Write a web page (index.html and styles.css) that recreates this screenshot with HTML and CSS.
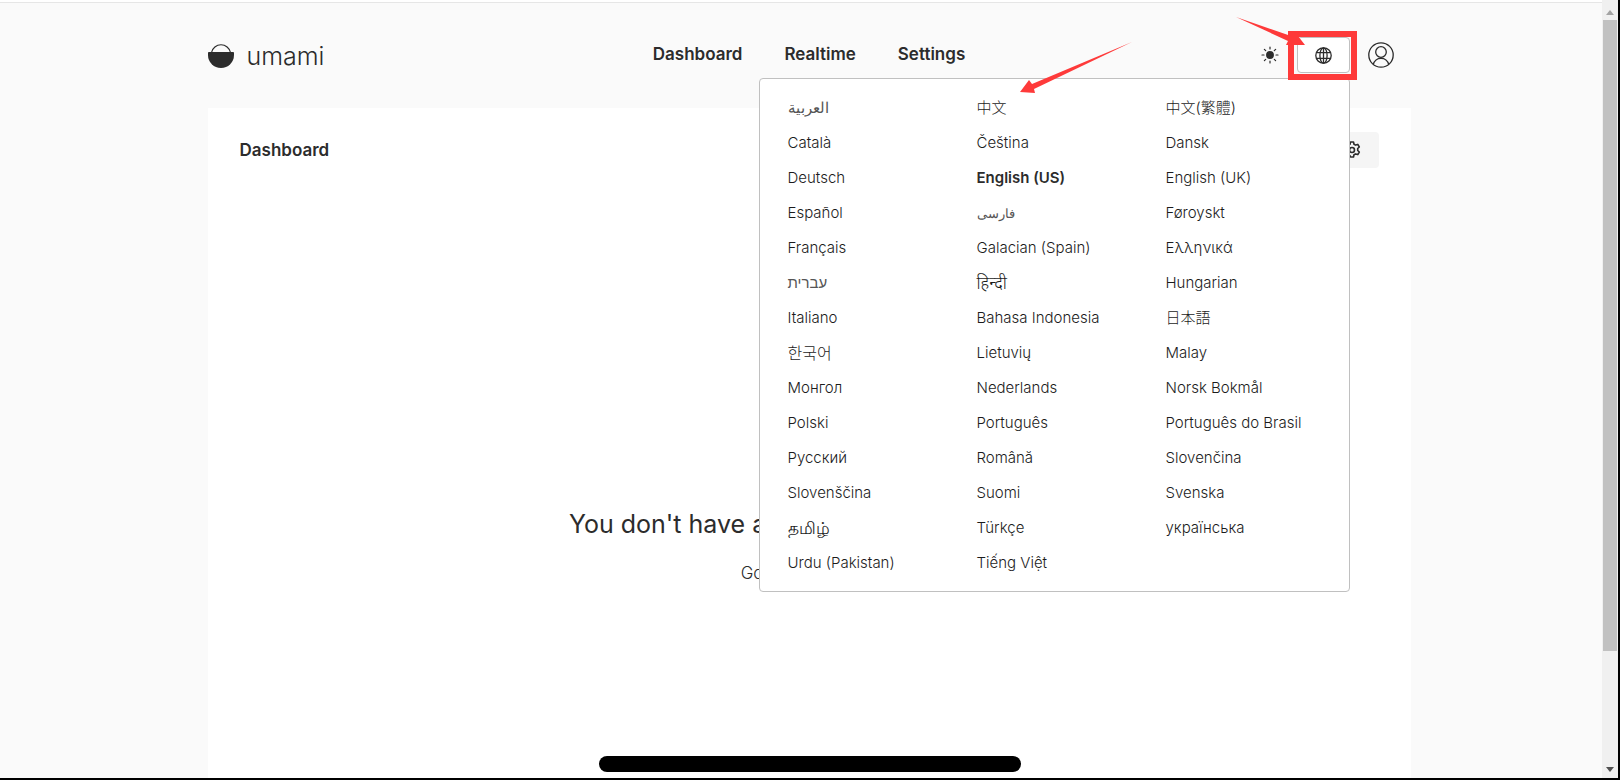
FILE: index.html
```
<!DOCTYPE html>
<html lang="en">
<head>
<meta charset="utf-8">
<title>umami</title>
<link rel="stylesheet" href="styles.css">
</head>
<body>
<div class="window">
  <div class="page">
    <div class="container">
      <header class="header">
        <a class="brand" href="#">
          <svg class="brand-mark" viewBox="0 0 26 24" aria-hidden="true">
            <path d="M3.500 8.500a9.700 9.700 0 0 1 19 0" fill="none" stroke="#2c2c2c" stroke-width="1.200"/>
            <path d="M0 8.700Q0 8 .8 8H25.200Q26 8 26 8.700V11a13 13 0 0 1-26 0Z" fill="#2c2c2c"/>
          </svg>
          <span>umami</span>
        </a>
        <nav class="nav">
          <a href="#">Dashboard</a>
          <a href="#">Realtime</a>
          <a href="#">Settings</a>
        </nav>
        <div class="tools">
          <button class="icon-button" type="button" aria-label="Theme">
            <svg width="18" height="18" viewBox="0 0 18 18" stroke="#2c2c2c" stroke-width="1.200" stroke-linecap="round" aria-hidden="true">
              <circle cx="9" cy="9" r="3.300" fill="#2c2c2c"/>
              <path d="M9 1v2M9 15v2M1 9h2M15 9h2M3.400 3.400l1.300 1.300M13.300 13.300l1.300 1.300M3.400 14.600l1.300-1.300M13.300 4.700l1.300-1.300"/>
            </svg>
          </button>
          <div class="language">
            <button class="language-button" type="button" aria-label="Language" aria-expanded="true">
              <svg width="17" height="17" viewBox="0 0 17 17" fill="none" stroke="#2c2c2c" stroke-width="1.300" aria-hidden="true">
                <circle cx="8.500" cy="8.500" r="7.700"/>
                <ellipse cx="8.500" cy="8.500" rx="3.600" ry="7.700"/>
                <path d="M8.500 .8v15.400M1.500 5.700h14M1.500 11.300h14"/>
              </svg>
            </button>
            <ul class="menu">
              <li><button type="button" lang="ar">العربية</button></li>
              <li><button type="button" lang="zh-CN">中文</button></li>
              <li><button type="button" lang="zh-TW">中文(繁體)</button></li>
              <li><button type="button">Català</button></li>
              <li><button type="button">Čeština</button></li>
              <li><button type="button">Dansk</button></li>
              <li><button type="button">Deutsch</button></li>
              <li><button type="button" class="selected">English (US)</button></li>
              <li><button type="button">English (UK)</button></li>
              <li><button type="button">Español</button></li>
              <li><button type="button" lang="fa">فارسی</button></li>
              <li><button type="button">Føroyskt</button></li>
              <li><button type="button">Français</button></li>
              <li><button type="button">Galacian (Spain)</button></li>
              <li><button type="button">Ελληνικά</button></li>
              <li><button type="button" lang="he">עברית</button></li>
              <li><button type="button" lang="hi">हिन्दी</button></li>
              <li><button type="button">Hungarian</button></li>
              <li><button type="button">Italiano</button></li>
              <li><button type="button">Bahasa Indonesia</button></li>
              <li><button type="button" lang="ja">日本語</button></li>
              <li><button type="button" lang="ko">한국어</button></li>
              <li><button type="button">Lietuvių</button></li>
              <li><button type="button">Malay</button></li>
              <li><button type="button">Монгол</button></li>
              <li><button type="button">Nederlands</button></li>
              <li><button type="button">Norsk Bokmål</button></li>
              <li><button type="button">Polski</button></li>
              <li><button type="button">Português</button></li>
              <li><button type="button">Português do Brasil</button></li>
              <li><button type="button">Русский</button></li>
              <li><button type="button">Română</button></li>
              <li><button type="button">Slovenčina</button></li>
              <li><button type="button">Slovenščina</button></li>
              <li><button type="button">Suomi</button></li>
              <li><button type="button">Svenska</button></li>
              <li><button type="button" lang="ta">தமிழ்</button></li>
              <li><button type="button">Türkçe</button></li>
              <li><button type="button">українська</button></li>
              <li><button type="button">Urdu (Pakistan)</button></li>
              <li><button type="button">Tiếng Việt</button></li>
            </ul>
            <div class="highlight"></div>
            <svg class="arrows" width="360" height="100" viewBox="1010 10 360 100" fill="#fe3a3a" aria-hidden="true">
              <path d="M1236 17L1291 36L1298 36L1305 45L1286 45L1288 41Z"/>
              <path d="M1132 42L1034 89L1035 93L1020 92L1029 80L1032 84Z"/>
            </svg>
          </div>
          <button class="icon-button" type="button" aria-label="Profile">
            <svg width="26" height="26" viewBox="0 0 26 26" fill="none" stroke="#2c2c2c" stroke-width="1.300" aria-hidden="true">
              <circle cx="13" cy="13" r="12.200"/>
              <circle cx="13" cy="10" r="5.300"/>
              <path d="M5.300 22.400a7.900 7.900 0 0 1 15.400 0"/>
            </svg>
          </button>
        </div>
      </header>
      <main class="main">
        <div class="title-row">
          <h1>Dashboard</h1>
          <button class="edit-button" type="button" aria-label="Edit dashboard">
            <svg width="18" height="18" viewBox="0 0 18 18" fill="none" stroke="#2c2c2c" stroke-width="1.600" stroke-linejoin="round" aria-hidden="true">
              <path d="M7.500 1h3l.5 2.200 1.600.9 2.200-.7 1.500 2.600-1.600 1.500v2l1.600 1.500-1.500 2.600-2.200-.7-1.600.9-.5 2.200h-3L7 14.800l-1.600-.9-2.200.7L1.700 12l1.600-1.500v-3L1.700 6l1.500-2.600 2.200.7L7 3.200Z"/>
              <circle cx="9" cy="9" r="2.500"/>
            </svg>
          </button>
        </div>
        <section class="empty">
          <h2>You don't have any websites configured.</h2>
          <a href="#">Go to settings
            <svg width="16" height="16" viewBox="0 0 16 16" fill="none" stroke="#2c2c2c" aria-hidden="true"><path d="M2 8h11M9 4l4 4-4 4"/></svg>
          </a>
        </section>
      </main>
    </div>
    <div class="home-bar"></div>
  </div>
  <div class="scrollbar">
    <svg width="8" height="5" viewBox="0 0 8 5" aria-hidden="true"><path d="M0 5L4 0L8 5Z" fill="#a3a3a3"/></svg>
    <div class="track"><div class="thumb"></div></div>
    <svg width="8" height="5" viewBox="0 0 8 5" aria-hidden="true"><path d="M0 0L4 5L8 0Z" fill="#505050"/></svg>
  </div>
</div>
</body>
</html>
```

FILE: styles.css
```
* {
  box-sizing: border-box;
}

body {
  margin: 0;
  color: #2c2c2c;
  font-family: Inter, "Noto Sans", "Noto Sans CJK SC", sans-serif;
  font-size: 15px;
}

a {
  color: inherit;
  text-decoration: none;
}

button {
  border: 0;
  padding: 0;
  background: none;
  color: inherit;
  font: inherit;
}

svg {
  display: block;
}

.window {
  display: flex;
  height: 100vh;
  overflow: hidden;
  border-right: 2px solid #000;
  border-bottom: 2px solid #000;
  background: #fafafa;
}

.page {
  position: relative;
  flex: 1;
  min-width: 0;
  padding-left: 16px;
  border-top: 2px solid #fff;
  box-shadow: inset 0 1px #e6e6e6;
}

.container {
  display: flex;
  flex-direction: column;
  max-width: 1203px;
  height: 100%;
  margin: 0 auto;
}

.header {
  display: grid;
  grid-template-columns: 1fr auto 1fr;
  align-items: center;
  height: 106px;
}

.brand {
  display: flex;
  align-items: center;
  gap: 13px;
  padding-top: 2px;
  font-size: 25px;
  font-weight: 300;
}

.brand-mark {
  width: 26px;
  height: 24px;
}

.nav {
  display: flex;
  gap: 42px;
  padding-bottom: 2px;
  font-size: 17px;
  font-weight: 600;
}

.tools {
  display: flex;
  align-items: center;
  justify-content: flex-end;
  gap: 18px;
  padding-right: 17px;
}

.language {
  position: relative;
}

.language-button {
  display: grid;
  place-items: center;
  width: 53px;
  height: 36px;
  border: 1px solid #c0c0c0;
  border-radius: 4px;
  background: #fff;
}

.menu {
  position: absolute;
  z-index: 2;
  top: 41px;
  right: 0;
  display: grid;
  grid-template-columns: repeat(3, 189px);
  margin: 0;
  padding: 11px;
  border: 1px solid #c0c0c0;
  border-radius: 4px;
  background: #fff;
  list-style: none;
}

.menu button {
  width: 100%;
  height: 35px;
  padding: 0 17px;
  color: #1c1c1c;
  font-weight: 300;
  line-height: 34px;
  text-align: left;
  white-space: nowrap;
}

.menu .selected {
  color: #2c2c2c;
  font-weight: 600;
}

.menu :lang(ar),
.menu :lang(he) {
  color: #555;
}

.menu :lang(fa) {
  color: #555;
  font-size: 13px;
}

.menu :lang(ko) {
  font-size: 16px;
}

.menu :lang(hi),
.menu :lang(ta) {
  font-size: 17px;
}

.highlight {
  position: absolute;
  z-index: 3;
  top: -6px;
  left: -9px;
  width: 69px;
  height: 49px;
  border: 6px solid #fe3a3a;
}

.arrows {
  position: absolute;
  z-index: 3;
  top: -27px;
  left: -287px;
  pointer-events: none;
}

.main {
  display: flex;
  flex: 1;
  flex-direction: column;
  padding: 24px 32px 0;
  background: #fff;
}

.title-row {
  display: flex;
  align-items: center;
  justify-content: space-between;
}

h1 {
  margin: 0;
  font-size: 17px;
  font-weight: 600;
}

.edit-button {
  display: grid;
  place-items: center;
  width: 53px;
  height: 36px;
  border-radius: 4px;
  background: #f5f5f5;
}

.empty {
  display: flex;
  flex: 1;
  flex-direction: column;
  align-items: center;
  justify-content: center;
  gap: 24px;
  padding-top: 146px;
}

h2 {
  margin: 0;
  font-size: 25px;
  font-weight: 400;
}

.empty a {
  display: flex;
  align-items: center;
  gap: 12px;
  font-size: 17px;
  font-weight: 300;
}

.home-bar {
  position: absolute;
  bottom: 6px;
  left: 599px;
  width: 422px;
  height: 16px;
  border-radius: 8px;
  background: #000;
}

.scrollbar {
  display: flex;
  flex-direction: column;
  align-items: center;
  gap: 5px;
  width: 16px;
  padding: 10px 0 6px;
  background: #f0f0f0;
}

.track {
  flex: 1;
  width: 14px;
}

.thumb {
  height: 85%;
  background: #c1c1c1;
}
```
